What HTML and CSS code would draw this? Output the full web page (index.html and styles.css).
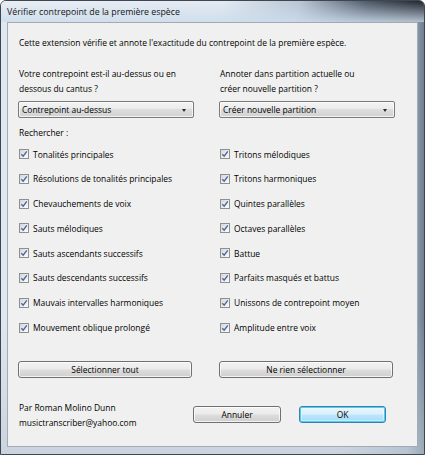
FILE: index.html
```html
<!DOCTYPE html>
<html lang="fr">
<head>
<meta charset="utf-8">
<title>Vérifier contrepoint de la première espèce</title>
<link rel="stylesheet" href="styles.css">
</head>
<body>
<div class="window">
  <div class="titlebar"><span class="title">Vérifier contrepoint de la première espèce</span></div>
  <div class="frame">
    <div class="panel">
      <p class="intro">Cette extension vérifie et annote l'exactitude du contrepoint de la première espèce.</p>
      <div class="cols questions">
        <div class="q">
          <p class="qtext">Votre contrepoint est-il au-dessus ou en<br>dessous du cantus ?</p>
          <div class="select"><span>Contrepoint au-dessus</span><span class="arrow"></span></div>
        </div>
        <div class="q">
          <p class="qtext">Annoter dans partition actuelle ou<br>créer nouvelle partition ?</p>
          <div class="select"><span>Créer nouvelle partition</span><span class="arrow"></span></div>
        </div>
      </div>
      <p class="label">Rechercher :</p>
      <div class="checks">
        <label class="check"><span class="box"><svg viewBox="0 0 8 8" width="8" height="8"><path d="M1.3 4.2 L3.2 6.2 L6.8 1.4"/></svg></span>Tonalités principales</label>
        <label class="check"><span class="box"><svg viewBox="0 0 8 8" width="8" height="8"><path d="M1.3 4.2 L3.2 6.2 L6.8 1.4"/></svg></span>Résolutions de tonalités principales</label>
        <label class="check"><span class="box"><svg viewBox="0 0 8 8" width="8" height="8"><path d="M1.3 4.2 L3.2 6.2 L6.8 1.4"/></svg></span>Chevauchements de voix</label>
        <label class="check"><span class="box"><svg viewBox="0 0 8 8" width="8" height="8"><path d="M1.3 4.2 L3.2 6.2 L6.8 1.4"/></svg></span>Sauts mélodiques</label>
        <label class="check"><span class="box"><svg viewBox="0 0 8 8" width="8" height="8"><path d="M1.3 4.2 L3.2 6.2 L6.8 1.4"/></svg></span>Sauts ascendants successifs</label>
        <label class="check"><span class="box"><svg viewBox="0 0 8 8" width="8" height="8"><path d="M1.3 4.2 L3.2 6.2 L6.8 1.4"/></svg></span>Sauts descendants successifs</label>
        <label class="check"><span class="box"><svg viewBox="0 0 8 8" width="8" height="8"><path d="M1.3 4.2 L3.2 6.2 L6.8 1.4"/></svg></span>Mauvais intervalles harmoniques</label>
        <label class="check"><span class="box"><svg viewBox="0 0 8 8" width="8" height="8"><path d="M1.3 4.2 L3.2 6.2 L6.8 1.4"/></svg></span>Mouvement oblique prolongé</label>
        <label class="check"><span class="box"><svg viewBox="0 0 8 8" width="8" height="8"><path d="M1.3 4.2 L3.2 6.2 L6.8 1.4"/></svg></span>Tritons mélodiques</label>
        <label class="check"><span class="box"><svg viewBox="0 0 8 8" width="8" height="8"><path d="M1.3 4.2 L3.2 6.2 L6.8 1.4"/></svg></span>Tritons harmoniques</label>
        <label class="check"><span class="box"><svg viewBox="0 0 8 8" width="8" height="8"><path d="M1.3 4.2 L3.2 6.2 L6.8 1.4"/></svg></span>Quintes parallèles</label>
        <label class="check"><span class="box"><svg viewBox="0 0 8 8" width="8" height="8"><path d="M1.3 4.2 L3.2 6.2 L6.8 1.4"/></svg></span>Octaves parallèles</label>
        <label class="check"><span class="box"><svg viewBox="0 0 8 8" width="8" height="8"><path d="M1.3 4.2 L3.2 6.2 L6.8 1.4"/></svg></span>Battue</label>
        <label class="check"><span class="box"><svg viewBox="0 0 8 8" width="8" height="8"><path d="M1.3 4.2 L3.2 6.2 L6.8 1.4"/></svg></span>Parfaits masqués et battus</label>
        <label class="check"><span class="box"><svg viewBox="0 0 8 8" width="8" height="8"><path d="M1.3 4.2 L3.2 6.2 L6.8 1.4"/></svg></span>Unissons de contrepoint moyen</label>
        <label class="check"><span class="box"><svg viewBox="0 0 8 8" width="8" height="8"><path d="M1.3 4.2 L3.2 6.2 L6.8 1.4"/></svg></span>Amplitude entre voix</label>
      </div>
      <div class="cols selbtns">
        <button class="btn wide">Sélectionner tout</button>
        <button class="btn wide">Ne rien sélectionner</button>
      </div>
      <div class="footer">
        <div class="author">
          <p>Par Roman Molino Dunn</p>
          <p>musictranscriber@yahoo.com</p>
        </div>
        <div class="actions">
          <button class="btn action">Annuler</button>
          <button class="btn action default">OK</button>
        </div>
      </div>
    </div>
  </div>
</div>
</body>
</html>
```
FILE: styles.css
```css
html, body {
  margin: 0;
  padding: 0;
  background: #ffffff;
}
body {
  font-family: "Open Sans", "Noto Sans", sans-serif;
  font-size: 8.45px;
  line-height: 15px;
  color: #000;
}
p { margin: 0; }

.window {
  width: 425px;
  height: 455px;
  box-sizing: border-box;
  border: 1px solid #3e4650;
  border-radius: 6px 6px 0 0;
  display: flex;
  flex-direction: column;
  overflow: hidden;
  background:
    linear-gradient(to bottom, rgba(206,220,236,0) 0, rgba(206,220,236,0) 70%, rgba(190,200,210,0.6) 100%),
    linear-gradient(to right, #dfe7f0 0%, #dde6ef 80%, #aebfd2 96%, #6e7f93 100%);
}
.titlebar {
  height: 21px;
  flex: none;
  padding-left: 6px;
  display: flex;
  align-items: center;
  background:
    linear-gradient(to bottom, rgba(205,220,236,0) 0%, rgba(205,220,236,0.85) 100%),
    linear-gradient(100deg, #e8eef5 0%, #e3eaf2 52%, #b8c5d3 70%, #4d5866 86%, #1c2027 100%);
}
.title {
  font-size: 8.8px;
  color: #141414;
  margin-top: 1px;
}
.frame {
  flex: 1;
  padding: 0 6px 7px 6px;
  display: flex;
}
.panel {
  flex: 1;
  border: 1px solid #a2abb4;
  background: #f0f0f0;
  padding: 12px 0 0 11px;
}

.cols {
  display: grid;
  grid-template-columns: 175px 175px;
  column-gap: 26px;
}
.questions { margin-top: 16px; }
.select {
  margin-top: 5px;
  margin-left: -1px;
  height: 17px;
  box-sizing: border-box;
  border: 1px solid #7a7a7a;
  border-radius: 2px;
  background: linear-gradient(to bottom, #f4f4f4 0%, #ebebeb 45%, #dddddd 50%, #d2d2d2 100%);
  box-shadow: inset 0 0 0 1px rgba(255,255,255,0.7);
  display: flex;
  align-items: center;
  justify-content: space-between;
  padding: 0 7px 0 3px;
  line-height: 15px;
}
.arrow {
  width: 0;
  height: 0;
  border-left: 2.5px solid transparent;
  border-right: 2.5px solid transparent;
  border-top: 3px solid #2a2a2a;
  margin-top: 1px;
}
.label { margin-top: 7px; }

.checks {
  margin-top: 6.5px;
  display: grid;
  grid-template-columns: 175px 175px;
  column-gap: 26px;
  grid-template-rows: repeat(8, 15px);
  grid-auto-flow: column;
  row-gap: 9.8px;
}
.check {
  display: flex;
  align-items: center;
  white-space: nowrap;
}
.box {
  width: 10px;
  height: 10px;
  box-sizing: border-box;
  border: 1px solid #8e8f8f;
  background: linear-gradient(135deg, #d6d6d6 0%, #ececec 55%, #fbfbfb 100%);
  display: flex;
  align-items: center;
  justify-content: center;
  margin-right: 4px;
  flex: none;
}
.box svg path {
  fill: none;
  stroke: #4a66a0;
  stroke-width: 1.4;
}

.btn {
  font-family: inherit;
  font-size: inherit;
  color: #000;
  height: 17px;
  box-sizing: border-box;
  border: 1px solid #707070;
  border-radius: 3px;
  background: linear-gradient(to bottom, #f2f2f2 0%, #ebebeb 48%, #dddddd 52%, #cfcfcf 100%);
  box-shadow: inset 0 0 0 1px rgba(255,255,255,0.75);
  padding: 0;
  line-height: 15px;
}
.selbtns { margin-top: 26px; }
.btn.wide { width: 174px; margin-left: -1px; }

.footer {
  margin-top: 22px;
  display: flex;
  align-items: flex-start;
}
.actions {
  margin-left: auto;
  margin-right: 31px;
  margin-top: 6px;
  display: flex;
  gap: 18px;
}
.btn.action { width: 88px; }
.btn.default {
  width: 87px;
  border-color: #3c7fb1;
  background: linear-gradient(to bottom, #eaf6fd 0%, #d9f0fc 48%, #bee6fd 52%, #a7d9f5 100%);
  box-shadow: inset 0 0 0 1px #48d0f5, inset 0 0 0 2px rgba(255,255,255,0.4);
}
```
